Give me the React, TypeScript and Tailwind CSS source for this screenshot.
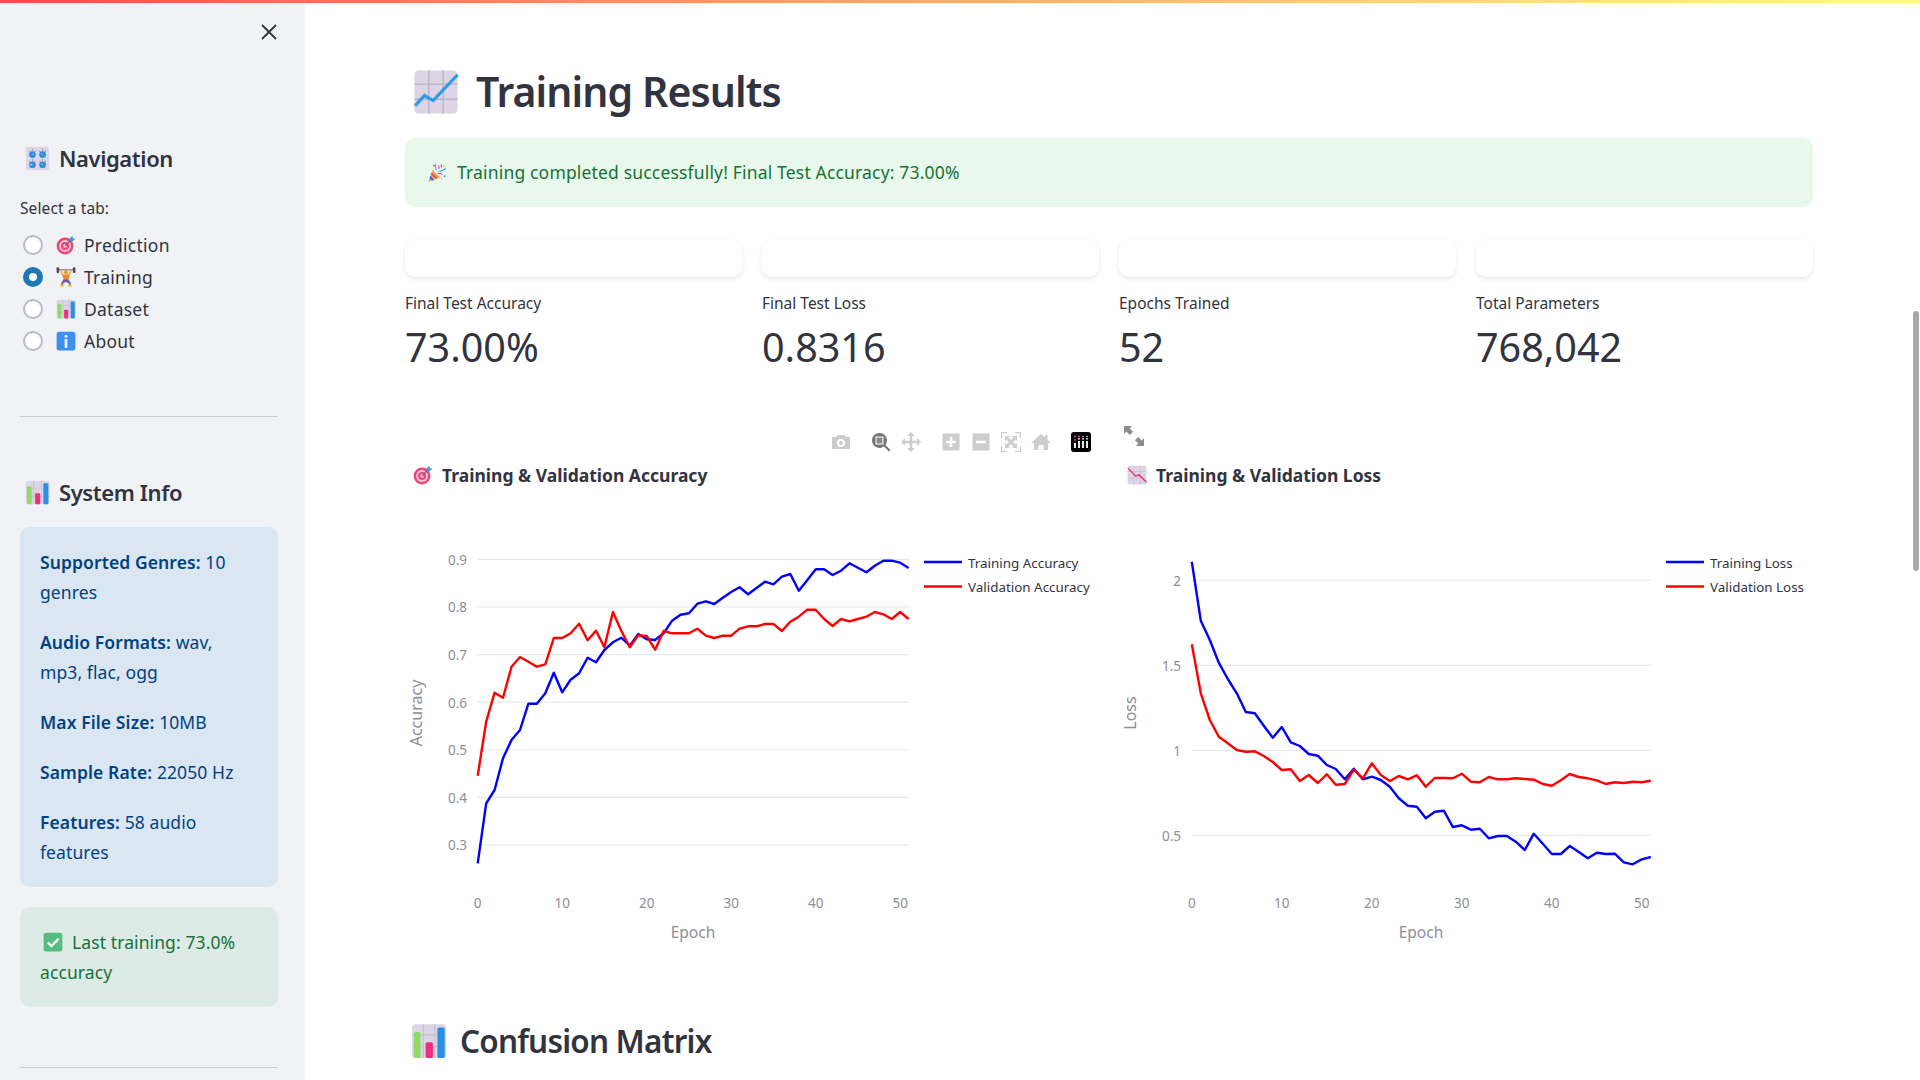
import React from 'react';

// chart traces as pixel rows measured per epoch
const accTrain = [1000,820,780,685,630,600,521,521,490,428,487,449,430,383,397,360,337,323,347,312,328,330,310,272,254,250,221,214,222,203,186,172,193,174,155,163,140,132,182,151,118,118,135,122,100,113,127,107,92,92,98,114];
const accVal = [737,575,488,503,410,381,395,410,403,324,324,310,281,331,302,352,246,302,352,316,318,359,303,310,310,310,296,317,324,317,317,296,289,289,282,282,303,275,260,239,239,267,288,267,274,267,260,246,253,267,246,267];
const lossTrain = [95,272,330,398,447,490,546,550,587,623,591,637,648,672,677,705,717,748,716,748,740,750,770,805,827,830,865,845,842,891,886,899,896,925,918,918,935,960,911,941,972,972,948,966,985,968,972,971,997,1003,988,981];
const lossVal = [343,490,570,620,640,660,665,664,678,696,720,718,753,735,759,733,764,762,719,745,700,735,753,738,748,736,770,744,744,745,731,755,757,741,748,748,745,747,749,762,767,751,732,741,745,751,762,757,759,755,757,752];

const Bars = ({ className = '' }: { className?: string }) => (
  <svg viewBox="0 0 32 32" className={className}>
    <rect x="1" y="1" width="30" height="30" rx="3" fill="#dcd6e4" />
    <path d="M1 10.5H31M1 21H31M11 1V31M21 1V31" stroke="#c3bbcd" strokeWidth="0.8" />
    <rect x="2.5" y="8" width="6" height="23" rx="1.5" fill="#8fdb66" />
    <rect x="13" y="17" width="6.5" height="14" rx="1.5" fill="#ee2f7c" />
    <rect x="23.5" y="4" width="6.5" height="27" rx="1.5" fill="#2a8fe6" />
  </svg>
);

const ChartUp = ({ className = '' }: { className?: string }) => (
  <svg viewBox="0 0 32 32" className={className}>
    <rect x="1" y="1" width="30" height="30" rx="3" fill="#ddd5e6" />
    <path d="M1 10.5H31M1 21H31M11 1V31M21 1V31" stroke="#bdb3c9" strokeWidth="1" />
    <path d="M1.5 25.5 L8 18.5 L14 22 L31 4" fill="none" stroke="#2f9be8" strokeWidth="2.2" />
  </svg>
);

const ChartDown = ({ className = '' }: { className?: string }) => (
  <svg viewBox="0 0 32 32" className={className}>
    <rect x="1" y="1" width="30" height="30" rx="3" fill="#ddd5e6" />
    <path d="M1 10.5H31M1 21H31M11 1V31M21 1V31" stroke="#c3bbcd" strokeWidth="1" />
    <path d="M1.5 5 L14 18 L19 15.5 L31 27.5" fill="none" stroke="#ee2f6e" strokeWidth="2.2" />
  </svg>
);

const Target = ({ className = '' }: { className?: string }) => (
  <svg viewBox="0 0 32 32" className={className}>
    <circle cx="14.5" cy="17.500" r="13.500" fill="#e8487a" />
    <circle cx="14.500" cy="17.500" r="9.500" fill="#f3c3d2" />
    <circle cx="14.500" cy="17.500" r="6.500" fill="#e8487a" />
    <circle cx="14.500" cy="17.500" r="3" fill="#f3c3d2" />
    <path d="M14.500 17.500 L26 6" stroke="#4f6a85" strokeWidth="1.800" />
    <path d="M22 5 L26.500 1 L27 5 L31 5.500 L27 10 L23 9.500Z" fill="#3a9be8" />
  </svg>
);

const Lifter = ({ className = '' }: { className?: string }) => (
  <svg viewBox="0 0 32 32" className={className}>
    <path d="M3 4.500H29" stroke="#6b6470" strokeWidth="1.600" />
    <rect x="1" y="0.500" width="4" height="9" rx="1.500" fill="#4a4550" />
    <rect x="27" y="0.500" width="4" height="9" rx="1.500" fill="#4a4550" />
    <path d="M8 5 L11 14 M24 5 L21 14" stroke="#f2b04f" strokeWidth="2.600" />
    <circle cx="16" cy="8.500" r="3.400" fill="#e89a3c" />
    <path d="M10.500 12 H21.500 L20 21 H12Z" fill="#f28322" />
    <path d="M12 20 H20 L23.500 25 V29 H20.500 V26 L16 24 L11.500 26 V29 H8.500 V25Z" fill="#6f5fa8" />
    <rect x="6.500" y="28.500" width="6" height="3" rx="1" fill="#f0c92e" />
    <rect x="19.500" y="28.500" width="6" height="3" rx="1" fill="#f0c92e" />
  </svg>
);

const Info = ({ className = '' }: { className?: string }) => (
  <svg viewBox="0 0 32 32" className={className}>
    <rect x="1" y="1" width="30" height="30" rx="4" fill="#3f8ff0" />
    <circle cx="16" cy="8.500" r="2.400" fill="#f2f0f6" />
    <rect x="13.800" y="13" width="4.400" height="14" fill="#f2f0f6" />
  </svg>
);

const Knobs = ({ className = '' }: { className?: string }) => (
  <svg viewBox="0 0 32 32" className={className}>
    <rect x="1" y="1" width="30" height="30" rx="3" fill="#ddd5e8" />
    <path d="M5.500 6L7 8M9.500 3.800V6M13.500 6L12 8M18.500 6L20 8M22.500 3.800V6M26.500 6L25 8M5.500 19L7 21M9.500 16.800V19M13.500 19L12 21M18.500 19L20 21M22.500 16.800V19M26.500 19L25 21" stroke="#77727f" strokeWidth="1" />
    <circle cx="9.500" cy="11" r="4.300" fill="#2f8ae0" />
    <circle cx="22.500" cy="11" r="4.300" fill="#2f8ae0" />
    <circle cx="9.500" cy="24" r="4.300" fill="#2f8ae0" />
    <circle cx="22.500" cy="24" r="4.300" fill="#2f8ae0" />
    <path d="M9.500 11L11 9.500M22.500 11L21 9.500M9.500 24H6.500M22.500 24L21 22.500" stroke="#e6f0fa" strokeWidth="1.200" />
  </svg>
);

const Party = ({ className = '' }: { className?: string }) => (
  <svg viewBox="0 0 32 32" className={className}>
    <path d="M2 30 L9 11 L21 23Z" fill="#f2a93b" />
    <path d="M5.500 20.500 L12 27 L8 28.500 L3.800 24.500Z" fill="#3a7de0" />
    <path d="M7.500 15 L17 24 L14 25.500 L6.300 18Z" fill="#e8467f" />
    <path d="M14 11 C15 7 13 5 14 2M20 14 C23 11 26 12 30 9" fill="none" stroke="#2f9be8" strokeWidth="1.700" />
    <path d="M19 4 L19 9M23 2 L23 7M17 16 L25 18" stroke="#ee2f9b" strokeWidth="1.700" />
    <circle cx="27" cy="5" r="1.600" fill="#f2c22e" />
    <circle cx="11" cy="4" r="1.400" fill="#ee2f6e" />
    <circle cx="28" cy="21" r="1.600" fill="#2fb4e8" />
    <circle cx="23" cy="25" r="1.300" fill="#f2c22e" />
  </svg>
);

const Check = ({ className = '' }: { className?: string }) => (
  <svg viewBox="0 0 32 32" className={className}>
    <rect x="1" y="1" width="30" height="30" rx="4" fill="#55bd80" />
    <path d="M7.500 16.500 L13.500 22.500 L25 10.500" fill="none" stroke="#f4f4f6" strokeWidth="4" />
  </svg>
);

const ToolIcon = ({ children, className = '' }: { children: React.ReactNode; className?: string }) => (
  <svg viewBox="0 0 20 20" className={`w-5 h-5 shrink-0 ${className}`} fill="#cdcdcd">
    {children}
  </svg>
);

const Modebar = () => (
  <div className="flex items-center h-[22px] ml-[426px]">
    <ToolIcon>
      <path fillRule="evenodd" d="M1 5h4l1.500-2h7L15 5h4v12H1ZM10 7a4 4 0 1 0 0 8 4 4 0 0 0 0-8Zm0 2a2 2 0 1 1 0 4 2 2 0 0 1 0-4Z" />
    </ToolIcon>
    <ToolIcon className="ml-5">
      <path fill="#777" fillRule="evenodd" d="M8.500 1a7.500 7.500 0 0 1 6 12l5 5-1.600 1.600-5-5A7.500 7.500 0 1 1 8.500 1ZM4.500 4.500v8h8v-8Z" />
      <rect x="5.500" y="5.500" width="6" height="6" fill="#8a8a8a" />
    </ToolIcon>
    <ToolIcon className="ml-2.5">
      <path d="M10 0l4 4h-2.700v4.700H16V6l4 4-4 4v-2.700h-4.700V16H14l-4 4-4-4h2.700v-4.700H4V14l-4-4 4-4v2.700h4.700V4H6Z" />
    </ToolIcon>
    <ToolIcon className="ml-5">
      <path fillRule="evenodd" d="M1.500 1.500h17v17h-17ZM8.700 5v3.700H5v2.600h3.700V15h2.600v-3.700H15V8.700h-3.700V5Z" />
    </ToolIcon>
    <ToolIcon className="ml-2.5">
      <path fillRule="evenodd" d="M1.500 1.500h17v17h-17ZM5 8.700v2.600h10V8.700Z" />
    </ToolIcon>
    <ToolIcon className="ml-2.5">
      <path d="M0 0h6v1.200H1.200V6H0ZM14 0h6v6h-1.200V1.200H14ZM0 14h1.200v4.800H6V20H0ZM18.800 14H20v6h-6v-1.200h4.800Z" />
      <path d="M4 4h5L7.500 5.500 10 8l2.500-2.500L11 4h5v5l-1.500-1.500L12 10l2.500 2.500L16 11v5h-5l1.500-1.500L10 12l-2.500 2.500L9 16H4v-5l1.500 1.500L8 10 5.500 7.500 4 9Z" />
    </ToolIcon>
    <ToolIcon className="ml-2.5">
      <path d="M10 2 L14 5.500V3h2.500v4.700L20 11h-3v7h-4.500v-5h-5v5H3v-7H0Z" />
    </ToolIcon>
    <svg viewBox="0 0 20 20" className="w-5 h-5 ml-5 shrink-0">
      <rect width="20" height="20" rx="3" fill="#000" />
      <path d="M4 11v5M8 9v7M12 9v7M16 9v7" stroke="#fff" strokeWidth="1.800" />
      <circle cx="4" cy="4.500" r="1" fill="#e8467f" />
      <circle cx="8" cy="4.500" r="1" fill="#e8467f" />
      <circle cx="12" cy="4.500" r="1" fill="#a06cd5" />
      <circle cx="16" cy="4.500" r="1" fill="#4cb4e8" />
      <circle cx="4" cy="8" r="0.900" fill="#e8467f" />
      <circle cx="8" cy="6.800" r="0.900" fill="#fff" />
      <circle cx="12" cy="6.800" r="0.900" fill="#fff" />
      <circle cx="16" cy="6.800" r="0.900" fill="#fff" />
    </svg>
    <svg viewBox="0 0 20 20" className="w-5 h-5 ml-[33px] -mt-3 shrink-0" fill="#8b8c93">
      <path d="M0 0h8L5.600 2.400l3.400 3.400-3.200 3.200-3.400-3.400L0 8ZM20 20h-8l2.400-2.400-3.400-3.400 3.200-3.200 3.400 3.400L20 12Z" />
    </svg>
  </div>
);

interface PlotProps {
  width: number;
  title: string;
  icon: React.ReactNode;
  train: number[];
  val: number[];
  // maps the measured columns onto the plot
  x0: number;
  step: number;
  gridLeft: number;
  gridRight: number;
  yLabel: string;
  yLabelX: number;
  epochX: number;
  xTicks: number[];
  yTicks: { label: string; y: number }[];
  tickRight: number;
  legendX: number;
  legend: [string, string];
}

const Plot = ({ width, title, icon, train, val, x0, step, gridLeft, gridRight, yLabel, yLabelX, epochX, xTicks, yTicks, tickRight, legendX, legend }: PlotProps) => {
  const toPath = (rows: number[]) =>
    rows.map((r, i) => `${(x0 + i * step).toFixed(1)},${(35 + r / 3).toFixed(1)}`).join(' ');
  return (
    <div>
      <div className="flex items-center gap-[9px] h-7 pl-2 mt-2">
        {icon}
        <h3 className="text-[17.500px] font-bold text-[#31333f]">{title}</h3>
      </div>
      <svg width={width} height={470} className="mt-1.5 block">
        {yTicks.map((t) => (
          <g key={t.label}>
            <line x1={gridLeft} x2={gridRight} y1={35 + t.y / 3} y2={35 + t.y / 3} stroke="#e6eaf1" strokeWidth="1.200" />
            <text x={tickRight} y={35 + t.y / 3 + 5.500} textAnchor="end" fontSize="13.500" fill="#8c8e99">{t.label}</text>
          </g>
        ))}
        {xTicks.map((t) => (
          <text key={t} x={x0 + t * step} y={412.500} textAnchor="middle" fontSize="13.500" fill="#8c8e99">{t}</text>
        ))}
        <text x={epochX} y={443} textAnchor="middle" fontSize="15.500" fill="#8c8e99">Epoch</text>
        <text transform={`translate(${yLabelX} 218) rotate(-90)`} textAnchor="middle" fontSize="16" fill="#8c8e99">{yLabel}</text>
        <polyline points={toPath(train)} fill="none" stroke="#0000ff" strokeWidth="2.400" strokeLinejoin="round" />
        <polyline points={toPath(val)} fill="none" stroke="#ff0000" strokeWidth="2.400" strokeLinejoin="round" />
        <line x1={legendX} x2={legendX + 38} y1={67} y2={67} stroke="#0000ff" strokeWidth="2.400" />
        <text x={legendX + 44} y={72.500} fontSize="13.400" fill="#31333f">{legend[0]}</text>
        <line x1={legendX} x2={legendX + 38} y1={91.500} y2={91.500} stroke="#ff0000" strokeWidth="2.400" />
        <text x={legendX + 44} y={96.500} fontSize="13.400" fill="#31333f">{legend[1]}</text>
      </svg>
    </div>
  );
};

const metrics = [
  { label: 'Final Test Accuracy', value: '73.00%' },
  { label: 'Final Test Loss', value: '0.8316' },
  { label: 'Epochs Trained', value: '52' },
  { label: 'Total Parameters', value: '768,042' },
];

const tabs = [
  { label: 'Prediction', icon: <Target className="w-5 h-5" /> },
  { label: 'Training', icon: <Lifter className="w-5 h-5" />, active: true },
  { label: 'Dataset', icon: <Bars className="w-5 h-5" /> },
  { label: 'About', icon: <Info className="w-5 h-5" /> },
];

const info = [
  ['Supported Genres:', '10 genres'],
  ['Audio Formats:', 'wav, mp3, flac, ogg'],
  ['Max File Size:', '10MB'],
  ['Sample Rate:', '22050 Hz'],
  ['Features:', '58 audio features'],
];

const Sidebar = () => (
  <aside className="w-[305px] shrink-0 h-full bg-[#f0f2f6] pl-5 pr-[27px] text-[#31333f]">
    <div className="flex justify-end pt-[24px] pr-[1px]">
      <svg viewBox="0 0 16 16" className="w-4 h-4 text-[#31333f]" fill="none" stroke="currentColor" strokeWidth="1.800">
        <path d="M1 1L15 15M15 1L1 15" />
      </svg>
    </div>
    <div className="flex items-center gap-[9px] mt-[102px] h-8 pl-[5px]">
      <Knobs className="w-[25px] h-[25px]" />
      <h2 className="text-[22px] font-semibold tracking-[-0.4px]">Navigation</h2>
    </div>
    <p className="mt-[22px] text-[15.500px] leading-6 tracking-[0.1px]">Select a tab:</p>
    <div className="mt-[9px] flex flex-col">
      {tabs.map((t) => (
        <div key={t.label} className="flex items-center h-8 pl-[3px]">
          {t.active ? (
            <span className="w-5 h-5 rounded-full bg-[#1f77b4] flex items-center justify-center">
              <span className="w-2 h-2 rounded-full bg-white" />
            </span>
          ) : (
            <span className="w-5 h-5 rounded-full bg-white border-2 border-[#b9bbc0]" />
          )}
          <span className="ml-[13px]">{t.icon}</span>
          <span className="ml-2 text-[17.500px] tracking-[0.25px]">{t.label}</span>
        </div>
      ))}
    </div>
    <hr className="mt-[59px] border-[#cbcdd1]" />
    <div className="flex items-center gap-[9px] mt-[59px] h-8 pl-[5px]">
      <Bars className="w-[25px] h-[25px]" />
      <h2 className="text-[22px] font-semibold tracking-[-0.4px]">System Info</h2>
    </div>
    <div className="mt-[19px] rounded-[10px] bg-[#dbe6f3] pl-5 pr-[38px] py-5 text-[#004280] text-[17.500px] leading-[30px] tracking-[0.1px] flex flex-col gap-5">
      {info.map(([k, v]) => (
        <p key={k}>
          <b className="font-semibold">{k}</b> {v}
        </p>
      ))}
    </div>
    <div className="mt-5 rounded-[10px] bg-[#dcebe5] pl-5 pr-[38px] py-5 text-[#17713a] text-[17.500px] leading-[30px] tracking-[0.1px]">
      <Check className="inline-block w-5 h-5 ml-[3px] mr-[9px] align-[-3px]" />
      Last training: 73.0% accuracy
    </div>
    <hr className="mt-[60px] border-[#cbcdd1]" />
  </aside>
);

export default function App() {
  return (
    <div className="relative h-screen overflow-hidden bg-white flex font-['Noto_Sans',sans-serif] text-[#31333f]">
      <div className="absolute inset-x-0 top-0 h-[3px] bg-gradient-to-r from-[#ff4b4b] to-[#fffd80]" />
      <Sidebar />
      <main className="flex-1 pl-[100px] pr-[107px] pt-16 min-w-0">
        <div className="flex items-center h-14 pl-2">
          <ChartUp className="w-[46px] h-[46px]" />
          <h1 className="ml-[17px] text-[41px] font-semibold tracking-[-0.9px]">Training Results</h1>
        </div>
        <div className="mt-[18px] h-[69px] rounded-[10px] bg-[#e8f8ed] flex items-center pl-[22px] text-[#177233] text-[17.500px] tracking-[0.17px]">
          <Party className="w-5 h-5 mr-[10px]" />
          Training completed successfully! Final Test Accuracy: 73.00%
        </div>
        <div className="mt-[33px] grid grid-cols-4 gap-5">
          {metrics.map((m) => (
            <div key={m.label}>
              <div className="h-[37px] rounded-[10px] bg-white shadow-[0_2px_4px_rgba(0,0,0,0.1)]" />
              <div className="mt-3.5 h-6 leading-6 text-[15.500px]">{m.label}</div>
              <div className="mt-1 h-14 leading-[56px] text-[39.500px]">{m.value}</div>
            </div>
          ))}
        </div>
        <div className="mt-[56px]">
          <Modebar />
        </div>
        <div className="grid grid-cols-[714px_1fr]">
          <Plot
            width={714}
            title="Training & Validation Accuracy"
            icon={<Target className="w-5 h-5" />}
            train={accTrain}
            val={accVal}
            x0={72.700}
            step={8.450}
            gridLeft={72}
            gridRight={504}
            yLabel="Accuracy"
            yLabelX={17}
            epochX={288}
            xTicks={[0, 10, 20, 30, 40, 50]}
            yTicks={['0.9', '0.8', '0.7', '0.6', '0.5', '0.4', '0.3'].map((label, i) => ({ label, y: 88 + i * 142.800 }))}
            tickRight={62}
            legendX={519}
            legend={['Training Accuracy', 'Validation Accuracy']}
          />
          <Plot
            width={694}
            title="Training & Validation Loss"
            icon={<ChartDown className="w-5 h-5" />}
            train={lossTrain}
            val={lossVal}
            x0={72.800}
            step={9}
            gridLeft={72.800}
            gridRight={532}
            yLabel="Loss"
            yLabelX={17}
            epochX={302}
            xTicks={[0, 10, 20, 30, 40, 50]}
            yTicks={[{ label: '2', y: 151 }, { label: '1.5', y: 406 }, { label: '1', y: 661 }, { label: '0.5', y: 916 }]}
            tickRight={62}
            legendX={547}
            legend={['Training Loss', 'Validation Loss']}
          />
        </div>
        <div className="flex items-center h-[50px] mt-[51px] pl-1.5">
          <Bars className="w-[36px] h-[36px]" />
          <h2 className="ml-[13px] text-[31.500px] font-semibold tracking-[-0.8px]">Confusion Matrix</h2>
        </div>
      </main>
      <div className="absolute right-px top-[311px] h-[260px] w-[6px] rounded-full bg-[#a9a9ad]" />
    </div>
  );
}
